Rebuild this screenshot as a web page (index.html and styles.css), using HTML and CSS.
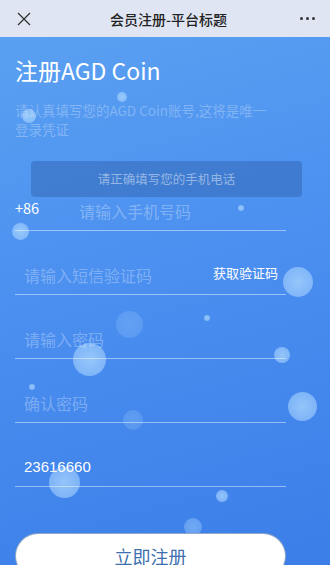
FILE: index.html
```html
<!DOCTYPE html>
<html lang="zh-CN">
<head>
    <meta charset="UTF-8">
    <meta name="viewport" content="width=device-width, initial-scale=1.0">
    <title>会员注册-平台标题</title>
    <link rel="stylesheet" href="styles.css">
</head>
<body>
    <div class="topbar">
        <span class="close-btn">
            <svg width="14" height="14" viewBox="0 0 14 14"><path d="M1 1 L13 13 M13 1 L1 13" stroke="#333" stroke-width="1.3" fill="none"/></svg>
        </span>
        <span class="topbar-title">会员注册-平台标题</span>
        <span class="more-btn"><i></i><i></i><i></i></span>
    </div>

    <div class="page">
        <!-- decorative bubbles -->
        <div class="bubbles">
            <span class="bubble b1"></span>
            <span class="bubble b2"></span>
            <span class="bubble b3"></span>
            <span class="bubble b4"></span>
            <span class="bubble b5"></span>
            <span class="bubble b6"></span>
            <span class="bubble b7"></span>
            <span class="bubble b8"></span>
            <span class="bubble b9"></span>
            <span class="bubble b10"></span>
            <span class="bubble b11"></span>
            <span class="bubble b12"></span>
            <span class="bubble b13"></span>
            <span class="bubble b14"></span>
            <span class="bubble b15"></span>
        </div>

        <div class="content">
            <h1 class="title">注册AGD Coin</h1>
            <p class="subtitle">请认真填写您的AGD Coin账号,这将是唯一<br>登录凭证</p>

            <div class="toast">请正确填写您的手机电话</div>

            <form class="form">
                <div class="field field-first">
                    <span class="prefix">+86</span>
                    <input class="input input-phone" type="text" placeholder="请输入手机号码">
                </div>
                <div class="field">
                    <input class="input" type="text" placeholder="请输入短信验证码">
                    <span class="code-btn">获取验证码</span>
                </div>
                <div class="field">
                    <input class="input" type="password" placeholder="请输入密码">
                </div>
                <div class="field">
                    <input class="input" type="password" placeholder="确认密码">
                </div>
                <div class="field">
                    <input class="input input-filled" type="text" value="23616660">
                </div>
                <button class="submit-btn" type="button">立即注册</button>
            </form>
        </div>
    </div>
</body>
</html>
```

FILE: styles.css
```css
* {
    margin: 0;
    padding: 0;
    box-sizing: border-box;
}

body {
    font-family: "Noto Sans CJK SC", "Noto Sans", sans-serif;
    width: 330px;
    height: 565px;
    overflow: hidden;
    background: #3d80e9;
}

.topbar {
    height: 37px;
    background: #dfe5f2;
    display: flex;
    align-items: center;
    justify-content: space-between;
    padding: 0 14px 0 17px;
}

.close-btn {
    display: flex;
    width: 14px;
    height: 14px;
}

.topbar-title {
    font-size: 14px;
    color: #222;
    font-weight: 500;
    margin-left: 6px;
}

.more-btn {
    display: flex;
    gap: 3px;
    width: 16px;
}

.more-btn i {
    width: 3px;
    height: 3px;
    border-radius: 50%;
    background: #333;
}

.page {
    position: relative;
    height: 528px;
    background: linear-gradient(165deg, #5aa0f1 0%, #4b8ff0 45%, #3b7ee8 100%);
    overflow: hidden;
}

.bubbles {
    position: absolute;
    inset: 0;
    pointer-events: none;
}

.bubble {
    position: absolute;
    border-radius: 50%;
    background: radial-gradient(circle, rgba(175, 218, 255, 0.75) 0%, rgba(165, 210, 255, 0.6) 70%, rgba(165, 210, 255, 0.25) 100%);
}

/* page is offset 37px from top of screen */
.b1 { left: 22px; top: 72px; width: 14px; height: 14px; }
.b2 { left: 117px; top: 55px; width: 10px; height: 10px; }
.b3 { left: 12px; top: 186px; width: 17px; height: 17px; }
.b4 { left: 238px; top: 168px; width: 6px; height: 6px; }
.b5 { left: 283px; top: 230px; width: 30px; height: 30px; }
.b6 { left: 116px; top: 274px; width: 27px; height: 27px; opacity: 0.35; }
.b7 { left: 204px; top: 278px; width: 6px; height: 6px; }
.b8 { left: 73px; top: 306px; width: 33px; height: 33px; }
.b9 { left: 274px; top: 310px; width: 16px; height: 16px; }
.b10 { left: 288px; top: 355px; width: 29px; height: 29px; }
.b11 { left: 123px; top: 373px; width: 20px; height: 20px; opacity: 0.35; }
.b12 { left: 49px; top: 430px; width: 31px; height: 31px; }
.b13 { left: 216px; top: 453px; width: 12px; height: 12px; }
.b14 { left: 184px; top: 481px; width: 18px; height: 18px; opacity: 0.6; }
.b15 { left: 29px; top: 347px; width: 6px; height: 6px; }

.content {
    position: relative;
    padding: 18px 15px 0;
}

.title {
    font-family: "Noto Sans CJK SC", sans-serif;
    font-size: 23px;
    line-height: 30px;
    font-weight: 400;
    color: #fff;
}

.subtitle {
    margin-top: 16px;
    font-size: 13.5px;
    line-height: 19px;
    color: rgba(255, 255, 255, 0.28);
}

.toast {
    margin: 22px 0 0 16px;
    width: 271px;
    height: 36px;
    line-height: 36px;
    border-radius: 4px;
    background: rgba(45, 95, 170, 0.45);
    color: rgba(255, 255, 255, 0.45);
    font-size: 12.5px;
    text-align: center;
}

.form {
    width: 271px;
}

.field {
    display: flex;
    align-items: flex-end;
    height: 64px;
    padding-bottom: 8px;
    border-bottom: 1px solid rgba(255, 255, 255, 0.45);
}

.field-first {
    height: 34px;
    padding-bottom: 8px;
}

.prefix {
    color: #fff;
    font-size: 14.5px;
    line-height: 22px;
    width: 64px;
    position: relative;
    top: -3px;
}

.input {
    flex: 1;
    min-width: 0;
    background: transparent;
    border: none;
    outline: none;
    font-family: "Noto Sans CJK SC", sans-serif;
    font-size: 16px;
    line-height: 22px;
    height: 22px;
    color: #fff;
    padding-left: 9px;
}

.input-phone {
    padding-left: 0;
}

.input::placeholder {
    color: rgba(255, 255, 255, 0.3);
}

.input-filled {
    font-family: "Liberation Sans", sans-serif;
    font-size: 15px;
}

.code-btn {
    color: #fff;
    font-size: 13px;
    line-height: 22px;
    margin-right: 8px;
    position: relative;
    top: -2px;
}

.submit-btn {
    display: block;
    margin-top: 46px;
    width: 271px;
    height: 46px;
    border-radius: 23px;
    border: 1px solid rgba(40, 80, 150, 0.5);
    background: #fff;
    color: #3e6fae;
    font-family: "Noto Sans CJK SC", sans-serif;
    font-size: 18px;
}
```
